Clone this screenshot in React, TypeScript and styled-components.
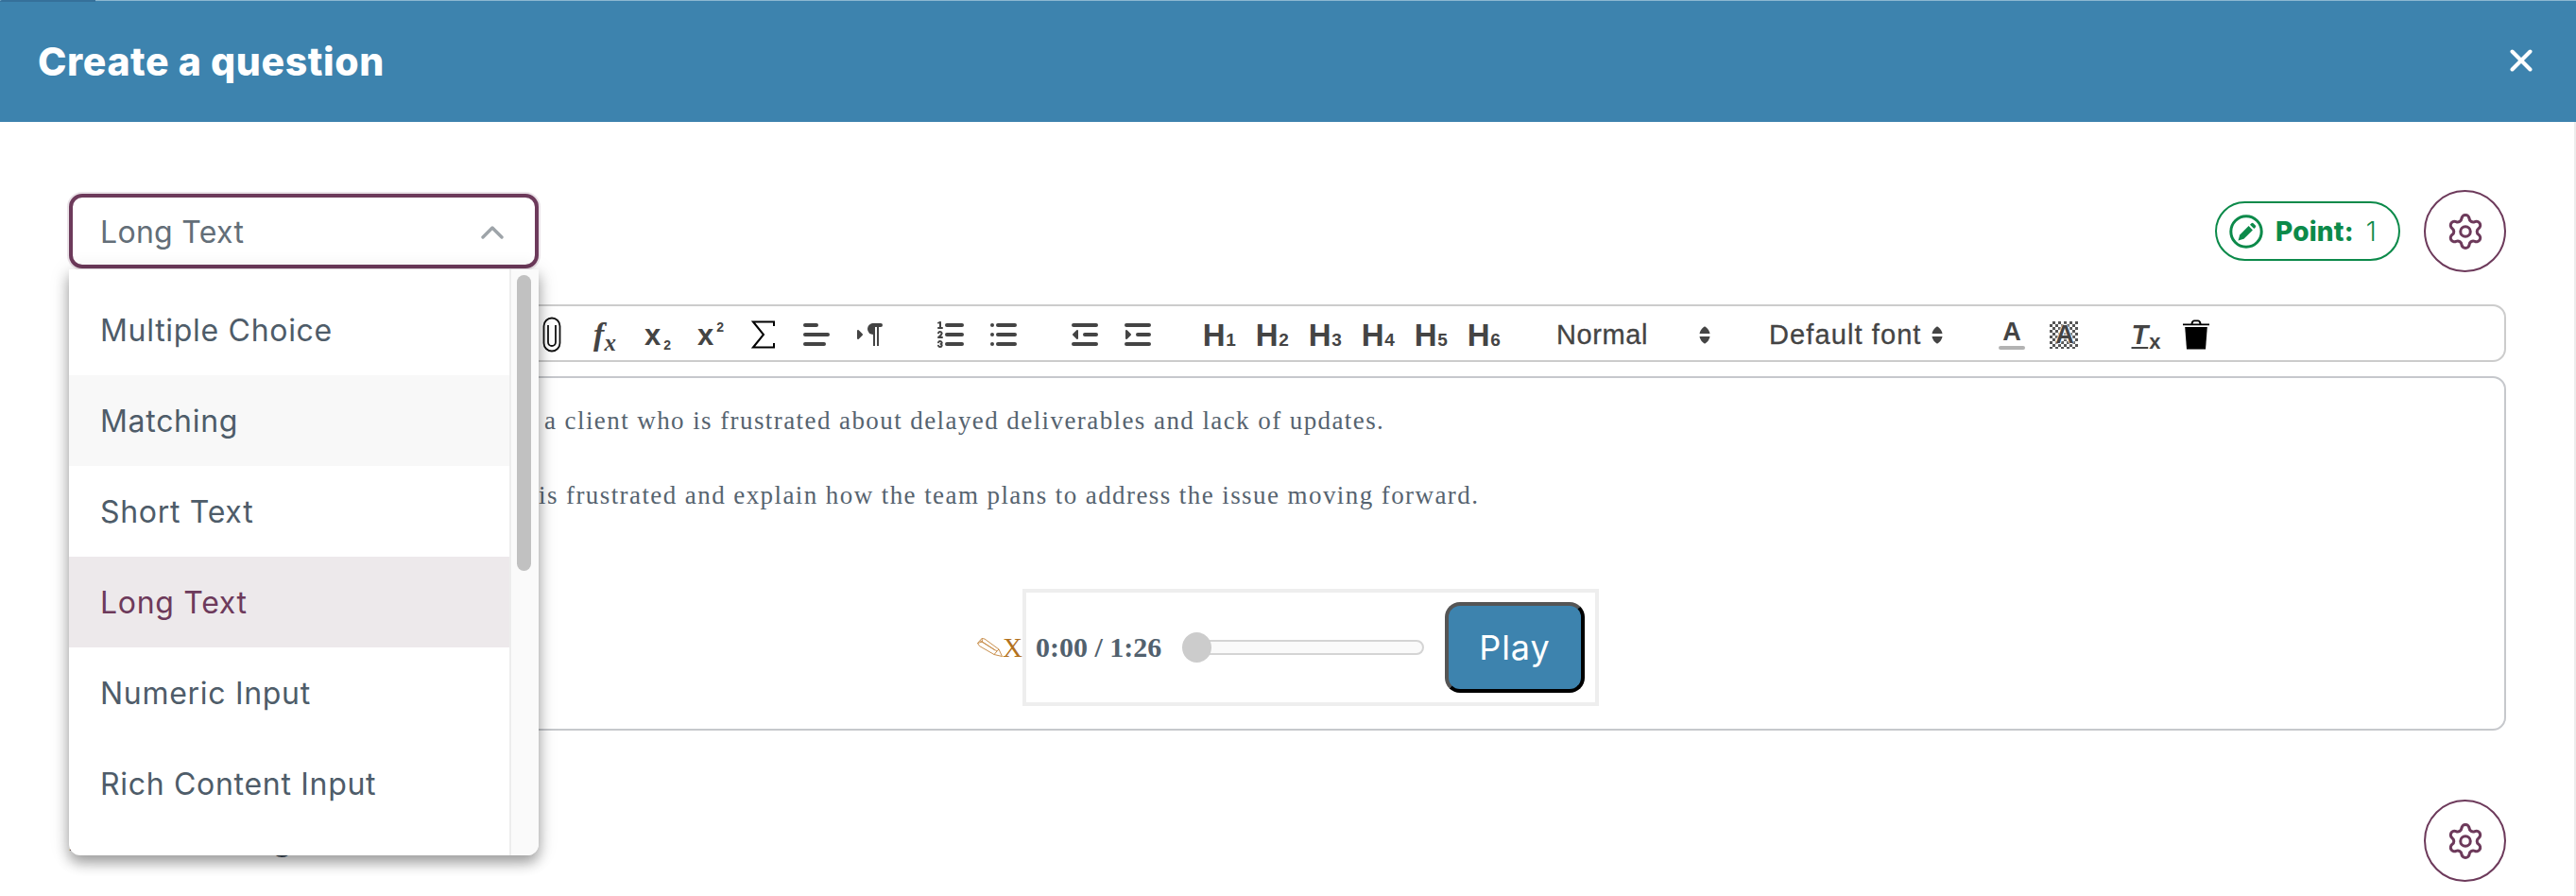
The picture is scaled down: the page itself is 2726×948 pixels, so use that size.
import React from "react";
import styled, { createGlobalStyle } from "styled-components";
import { Bold, Italic, Underline, Strikethrough, Quote, Code, Link, Image, Settings } from "lucide-react";

const SANS = `"Inter", "Liberation Sans", sans-serif`;
const HELV = `"Liberation Sans", Arial, sans-serif`;
const SERIF = `"Liberation Serif", "Times New Roman", serif`;
const PLUM = "#6d3a5b";
const BLUE = "#3d83ae";
const INK = "#444444";

const Global = createGlobalStyle`
  html, body { margin: 0; padding: 0; background: #fff; }
  #root { width: 2726px; height: 948px; overflow: hidden; }
  * { box-sizing: border-box; }
`;

const Page = styled.div`
  width: 2726px;
  height: 948px;
  overflow: hidden;
  background: #fff;
  font-family: ${SANS};
`;

const Header = styled.header`
  position: relative;
  height: 129px;
  background: ${BLUE};
  border-top: 1px solid #8cb7d1;
  padding: 0 46px 0 40px;
  display: flex;
  align-items: center;
  justify-content: space-between;
  &::before {
    content: "";
    position: absolute;
    left: 0;
    top: -1px;
    width: 101px;
    height: 2px;
    background: #35709a;
    border-top-left-radius: 4px;
  }
`;

const Title = styled.h1`
  margin: 0;
  color: #fff;
  font-size: 41px;
  line-height: 48px;
  font-weight: 800;
  letter-spacing: 0.6px;
`;

const CloseButton = styled.button`
  width: 24px;
  height: 24px;
  padding: 0;
  border: 0;
  background: none;
  display: block;
  margin-top: -2px;
  svg { display: block; }
`;

const Body = styled.main`
  height: 819px;
  border-right: 2px solid #ececec;
  padding: 72px 72px 0 73px;
`;

const TopRow = styled.div`
  height: 87px;
  display: flex;
  align-items: center;
  justify-content: space-between;
`;

const SelectWrap = styled.div`
  position: relative;
  width: 497px;
  z-index: 5;
`;

const SelectBox = styled.div`
  height: 79px;
  border: 4px solid ${PLUM};
  border-radius: 14px;
  box-shadow: 0 0 0 2px rgba(109, 58, 91, 0.14);
  background: #fff;
  padding: 2px 33px 0 29px;
  display: flex;
  align-items: center;
  justify-content: space-between;
  color: #636e78;
  font-size: 32px;
  letter-spacing: 0.3px;
`;

const Dropdown = styled.div`
  position: absolute;
  left: 0;
  top: 80px;
  width: 497px;
  height: 620px;
  display: flex;
  background: #fff;
  border-radius: 0 0 12px 12px;
  overflow: hidden;
  box-shadow: 0 8px 14px rgba(0, 0, 0, 0.32), 0 2px 22px rgba(0, 0, 0, 0.14);
`;

const OptionList = styled.ul`
  list-style: none;
  margin: 0;
  padding: 16px 0 0;
  flex: 1;
`;

const Option = styled.li<{ $state?: "hover" | "selected" }>`
  height: 96px;
  padding-left: 33px;
  display: flex;
  align-items: center;
  font-size: 32px;
  letter-spacing: 0.7px;
  color: ${(p) => (p.$state === "selected" ? PLUM : "#4e5c69")};
  background: ${(p) =>
    p.$state === "selected" ? "#ede9eb" : p.$state === "hover" ? "#f8f8f8" : "transparent"};
`;

const ScrollTrack = styled.div`
  width: 31px;
  background: #fafafa;
  border-left: 2px solid #ededed;
  padding: 6px 6px 0 6px;
`;

const ScrollThumb = styled.div`
  height: 313px;
  width: 15px;
  border-radius: 8px;
  background: #c1c1c1;
`;

const RightGroup = styled.div`
  display: flex;
  align-items: center;
  gap: 25px;
`;

const PointPill = styled.div`
  width: 196px;
  height: 63px;
  border: 2px solid #0c8a4a;
  border-radius: 32px;
  padding-left: 13px;
  display: flex;
  align-items: center;
  color: #0c8a4a;
  font-size: 28px;
`;

const PointLabel = styled.strong`
  font-weight: 800;
  margin-left: 13px;
  letter-spacing: 0.2px;
`;

const PointValue = styled.span`
  margin-left: 13px;
  font-weight: 300;
`;

const GearCircle = styled.button`
  width: 87px;
  height: 87px;
  flex: none;
  border-radius: 50%;
  border: 2px solid ${PLUM};
  background: #fff;
  padding: 0;
  display: flex;
  align-items: center;
  justify-content: center;
  color: ${PLUM};
`;

const Toolbar = styled.div`
  margin-top: 34px;
  height: 61px;
  border: 2px solid #cccccc;
  border-radius: 14px;
  padding: 3px 0 0 33px;
  display: flex;
  align-items: center;
  color: ${INK};
`;

const Group = styled.span`
  display: flex;
  align-items: center;
  margin-right: 30px;
`;

const ToolButton = styled.span<{ $dark?: boolean; $offset?: number }>`
  width: 56px;
  height: 48px;
  flex: none;
  margin-left: ${(p) => p.$offset ?? 0}px;
  display: flex;
  align-items: center;
  justify-content: center;
  color: ${(p) => (p.$dark ? "#000" : INK)};
`;

const FxGlyph = styled.span`
  font-family: ${SERIF};
  font-style: italic;
  font-weight: 700;
  font-size: 34px;
  line-height: 1;
  white-space: nowrap;
`;

const FxSub = styled.span`
  font-size: 25px;
  position: relative;
  top: 6px;
`;

const ScriptGlyph = styled.span`
  font-family: ${HELV};
  font-weight: 700;
  font-size: 31px;
  line-height: 1;
  white-space: nowrap;
`;

const SmallDigit = styled.span<{ $up?: boolean }>`
  font-size: 14px;
  font-weight: 700;
  position: relative;
  top: ${(p) => (p.$up ? "-14px" : "5px")};
  margin-left: 3px;
`;

const HeadingGlyph = styled.span`
  font-family: ${HELV};
  font-weight: 700;
  font-size: 33px;
  line-height: 1;
  white-space: nowrap;
  letter-spacing: -0.5px;
`;

const HeadingDigit = styled.span`
  font-size: 19px;
  font-weight: 700;
  margin-left: 1px;
`;

const Picker = styled.span<{ $w: number; $pad: number; $ls: number }>`
  width: ${(p) => p.$w}px;
  flex: none;
  display: flex;
  align-items: center;
  justify-content: space-between;
  padding-left: ${(p) => p.$pad}px;
  font-family: ${HELV};
  font-size: 29px;
  font-weight: 400;
  letter-spacing: ${(p) => p.$ls}px;
  color: ${INK};
  -webkit-text-stroke: 0.3px ${INK};
`;

const ColorGlyph = styled.span`
  position: relative;
  display: flex;
  flex-direction: column;
  align-items: center;
  font-family: ${HELV};
  font-weight: 700;
  font-size: 27px;
  line-height: 24px;
`;

const ColorBar = styled.span`
  display: block;
  width: 28px;
  height: 4px;
  border-radius: 2px;
  background: #b3b3b3;
  margin-top: 3px;
`;

const Dither = styled.span`
  position: absolute;
  inset: -1px -6px;
  width: 30px;
  height: 29px;
  background-image: repeating-conic-gradient(#555 0 25%, #fff 0 50%);
  background-size: 6px 6px;
`;

const DitherLetter = styled.span`
  position: relative;
  line-height: 27px;
  text-shadow: 0 0 2px #fff, 0 0 2px #fff, 0 0 3px #fff;
`;

const ClearGlyph = styled.span`
  position: relative;
  font-family: ${HELV};
  font-style: italic;
  font-weight: 700;
  font-size: 29px;
  line-height: 1;
  white-space: nowrap;
  text-decoration: underline;
  text-underline-offset: 3px;
`;

const ClearX = styled.span`
  font-style: normal;
  font-size: 22px;
  display: inline-block;
  margin-left: 1px;
  position: relative;
  top: 5px;
`;

const Editor = styled.section`
  margin-top: 15px;
  height: 375px;
  border: 2px solid #c6c8cc;
  border-radius: 14px;
  padding-top: 26px;
  font-family: ${SERIF};
  color: #56636f;
  font-size: 27px;
  letter-spacing: 1.42px;
`;

const Para = styled.p<{ $indent: number }>`
  margin: 0 0 40px;
  padding-left: ${(p) => p.$indent}px;
  line-height: 39px;
  white-space: nowrap;
`;

const AudioRow = styled.div`
  margin-top: 79px;
  display: flex;
  justify-content: center;
  align-items: center;
`;

const Scribble = styled.span`
  display: flex;
  align-items: center;
  color: #b3721e;
  font-size: 29px;
  letter-spacing: 0;
  white-space: nowrap;
  svg { margin-right: -1px; }
`;

const AudioBox = styled.div`
  width: 610px;
  height: 124px;
  border: 4px solid #eeeeee;
  padding-left: 10px;
  display: flex;
  align-items: center;
`;

const Time = styled.span`
  font-weight: 700;
  font-size: 30px;
  letter-spacing: 0;
  color: #52616e;
  white-space: nowrap;
  width: 155px;
`;

const Track = styled.div`
  position: relative;
  margin-left: 5px;
  width: 251px;
  height: 16px;
  border: 2px solid #d4d4d4;
  border-radius: 8px;
  background: #fafafa;
`;

const Thumb = styled.span`
  position: absolute;
  left: -7px;
  top: -10px;
  width: 31px;
  height: 32px;
  border-radius: 50%;
  background: #cccccc;
`;

const PlayButton = styled.button`
  margin-left: 22px;
  width: 148px;
  height: 96px;
  border-width: 4px;
  border-style: solid;
  border-color: #555 #000 #000 #555;
  border-radius: 16px;
  background: ${BLUE};
  color: #fff;
  font-family: ${SANS};
  font-size: 36px;
  letter-spacing: 1px;
  padding: 0;
`;

const FooterRow = styled.div`
  margin-top: 73px;
  display: flex;
  align-items: flex-end;
  justify-content: space-between;
`;

const SectionTitle = styled.h2`
  margin: 0 0 24px;
  font-size: 31.5px;
  line-height: 40px;
  font-weight: 700;
  color: #3d4a57;
`;

const PickerArrows = () => (
  <svg width="12" height="19" viewBox="0 0 12 19">
    <path d="M6 0.5 C8 1 11 4.5 11.5 8 H0.5 C1 4.5 4 1 6 0.5Z" fill={INK} />
    <path d="M6 18.5 C8 18 11 14.5 11.5 11 H0.5 C1 14.5 4 18 6 18.5Z" fill={INK} />
  </svg>
);

const QuillIcon: React.FC<{ children: React.ReactNode }> = ({ children }) => (
  <svg
    width="36"
    height="36"
    viewBox="0 0 18 18"
    fill="none"
    stroke={INK}
    strokeWidth="2"
    strokeLinecap="round"
    strokeLinejoin="round"
  >
    {children}
  </svg>
);

const GearIcon = () => <Settings size={42} strokeWidth={1.75} />;

const hiddenIcons = [Bold, Italic, Underline, Strikethrough, Quote, Code, Link, Image];

const options = ["Multiple Choice", "Matching", "Short Text", "Long Text", "Numeric Input", "Rich Content Input"];

export default function App() {
  return (
    <Page>
      <Global />
      <Header>
        <Title>Create a question</Title>
        <CloseButton aria-label="Close">
          <svg width="24" height="24" viewBox="0 0 24 24" stroke="#fff" strokeWidth="4" strokeLinecap="round">
            <line x1="2.5" y1="2.5" x2="21.5" y2="21.5" />
            <line x1="21.5" y1="2.5" x2="2.5" y2="21.5" />
          </svg>
        </CloseButton>
      </Header>
      <Body>
        <TopRow>
          <SelectWrap>
            <SelectBox>
              Long Text
              <svg width="24" height="15" viewBox="0 0 24 15" fill="none" stroke="#9ea4a9" strokeWidth="3.4" strokeLinecap="round" strokeLinejoin="round">
                <polyline points="2,13 12,3 22,13" />
              </svg>
            </SelectBox>
            <Dropdown>
              <OptionList>
                {options.map((o) => (
                  <Option key={o} $state={o === "Matching" ? "hover" : o === "Long Text" ? "selected" : undefined}>
                    {o}
                  </Option>
                ))}
              </OptionList>
              <ScrollTrack>
                <ScrollThumb />
              </ScrollTrack>
            </Dropdown>
          </SelectWrap>
          <RightGroup>
            <PointPill>
              <svg width="36" height="36" viewBox="0 0 36 36">
                <circle cx="18" cy="18" r="16.2" fill="none" stroke="#0c8a4a" strokeWidth="3" />
                <path d="M9.5 27.5 l1.7 -6 l9.4 -9.4 l4.3 4.3 l-9.4 9.4 z" fill="#0c8a4a" />
                <path d="M22 10.7 l1.5 -1.5 a1.4 1.4 0 0 1 2 0 l2.3 2.3 a1.4 1.4 0 0 1 0 2 l-1.5 1.5 z" fill="#0c8a4a" />
              </svg>
              <PointLabel>Point:</PointLabel>
              <PointValue>1</PointValue>
            </PointPill>
            <GearCircle aria-label="Settings">
              <GearIcon />
            </GearCircle>
          </RightGroup>
        </TopRow>

        <Toolbar>
          {hiddenIcons.map((I, i) => (
            <ToolButton key={i}>
              <I size={28} />
            </ToolButton>
          ))}
          <ToolButton $dark>
            <svg width="20" height="38" viewBox="0 0 20 38" fill="none" stroke="#111" strokeWidth="1.8">
              <path d="M1.5 27V10a8.5 8.5 0 0 1 17 0V28a8.5 8.5 0 0 1-17 0Z" />
              <path d="M6 9V27a4 4 0 0 0 8 0V9" />
            </svg>
          </ToolButton>
          <ToolButton>
            <FxGlyph>f<FxSub>x</FxSub></FxGlyph>
          </ToolButton>
          <ToolButton>
            <ScriptGlyph>x<SmallDigit>2</SmallDigit></ScriptGlyph>
          </ToolButton>
          <ToolButton>
            <ScriptGlyph>x<SmallDigit $up>2</SmallDigit></ScriptGlyph>
          </ToolButton>
          <ToolButton $dark>
            <svg width="26" height="30" viewBox="0 0 26 30" fill="none" stroke="#000" strokeWidth="2">
              <path d="M24 6V1.5H2L13 15 2 28.5H24V24" />
            </svg>
          </ToolButton>
          <ToolButton>
            <QuillIcon>
              <line x1="3" x2="15" y1="9" y2="9" />
              <line x1="3" x2="13" y1="14" y2="14" />
              <line x1="3" x2="9" y1="4" y2="4" />
            </QuillIcon>
          </ToolButton>
          <Group>
            <ToolButton>
              <QuillIcon>
                <polygon points="3 11 5 9 3 7 3 11" fill={INK} strokeWidth="1" />
                <line x1="15" x2="11" y1="4" y2="4" />
                <path d="M11,3a3,3,0,0,0,0,6h1V3H11Z" fill={INK} stroke="none" />
                <rect height="11" width="1" x="11" y="4" fill={INK} stroke="none" />
                <rect height="11" width="1" x="13" y="4" fill={INK} stroke="none" />
              </QuillIcon>
            </ToolButton>
          </Group>
          <Group>
            <ToolButton>
              <QuillIcon>
                <line x1="7" x2="15" y1="4" y2="4" />
                <line x1="7" x2="15" y1="9" y2="9" />
                <line x1="7" x2="15" y1="14" y2="14" />
                <line x1="2.5" x2="4.5" y1="5.5" y2="5.5" strokeWidth="1" />
                <path d="M3.5,6A0.5,0.5,0,0,1,3,5.5V3.085l-0.276.138A0.5,0.5,0,0,1,2.053,3c-0.124-.247-0.023-0.324.224-0.447l1-.5A0.5,0.5,0,0,1,4,2.5v3A0.5,0.5,0,0,1,3.5,6Z" fill={INK} stroke="none" />
                <path d="M4.5,10.5h-2c0-.234,1.85-1.076,1.85-2.234A0.959,0.959,0,0,0,2.5,8.156" strokeWidth="1" />
                <path d="M2.5,14.846a0.959,0.959,0,0,0,1.85-.109A0.7,0.7,0,0,0,3.75,14a0.688,0.688,0,0,0,.6-0.736,0.959,0.959,0,0,0-1.85-.109" strokeWidth="1" />
              </QuillIcon>
            </ToolButton>
            <ToolButton>
              <QuillIcon>
                <line x1="6" x2="15" y1="4" y2="4" />
                <line x1="6" x2="15" y1="9" y2="9" />
                <line x1="6" x2="15" y1="14" y2="14" />
                <line x1="3" x2="3" y1="4" y2="4" />
                <line x1="3" x2="3" y1="9" y2="9" />
                <line x1="3" x2="3" y1="14" y2="14" />
              </QuillIcon>
            </ToolButton>
          </Group>
          <Group>
            <ToolButton>
              <QuillIcon>
                <line x1="3" x2="15" y1="14" y2="14" />
                <line x1="3" x2="15" y1="4" y2="4" />
                <line x1="9" x2="15" y1="9" y2="9" />
                <polygon points="5 7 5 11 3 9 5 7" fill={INK} strokeWidth="1" />
              </QuillIcon>
            </ToolButton>
            <ToolButton>
              <QuillIcon>
                <line x1="3" x2="15" y1="14" y2="14" />
                <line x1="3" x2="15" y1="4" y2="4" />
                <line x1="9" x2="15" y1="9" y2="9" />
                <polygon points="3 7 3 11 5 9 3 7" fill={INK} strokeWidth="1" />
              </QuillIcon>
            </ToolButton>
          </Group>
          {[1, 2, 3, 4, 5, 6].map((n) => (
            <ToolButton key={n}>
              <HeadingGlyph>H<HeadingDigit>{n}</HeadingDigit></HeadingGlyph>
            </ToolButton>
          ))}
          <Picker $w={212} $pad={49} $ls={0.6}>
            Normal
            <PickerArrows />
          </Picker>
          <Picker $w={246} $pad={62} $ls={1.1}>
            Default font
            <PickerArrows />
          </Picker>
          <ToolButton $offset={45}>
            <ColorGlyph>A<ColorBar /></ColorGlyph>
          </ToolButton>
          <ToolButton>
            <ColorGlyph>
              <Dither />
              <DitherLetter>A</DitherLetter>
            </ColorGlyph>
          </ToolButton>
          <ToolButton $offset={30}>
            <ClearGlyph>T<ClearX>x</ClearX></ClearGlyph>
          </ToolButton>
          <ToolButton $dark $offset={-3}>
            <svg width="28" height="32" viewBox="0 0 28 32" fill="#000">
              <path d="M0 4.5H8.5C9 1.5 10.5 0.5 12 0.5H16C17.5 0.5 19 1.5 19.5 4.5H28V6.2H0Z M10.5 4.5H17.5C17.2 2.8 16.5 2.2 15.5 2.2H12.5C11.5 2.2 10.8 2.8 10.5 4.5Z" fillRule="evenodd" />
              <path d="M2.2 8H25.8L24 31.5H4Z" />
            </svg>
          </ToolButton>
        </Toolbar>

        <Editor>
          <Para $indent={501}>a client who is frustrated about delayed deliverables and lack of updates.</Para>
          <Para $indent={495}>is frustrated and explain how the team plans to address the issue moving forward.</Para>
          <AudioRow>
            <Scribble>
              <svg width="29" height="22" viewBox="0 0 29 22" fill="none" stroke="#c98f4d" strokeWidth="1" strokeLinejoin="round">
                <path d="M1.5 6.5 L6 1.5 L9 2 L24 13 L27.5 20.5 L19 18.5 L3.5 9.5Z" />
                <path d="M6 1.5 L6.5 5 L22 15 L24 13" />
                <path d="M1.5 6.5 L6.5 5 M22 15 L19 18.5 M4 3.8 L20 14" />
              </svg>
              X
            </Scribble>
            <AudioBox>
              <Time>0:00 / 1:26</Time>
              <Track><Thumb /></Track>
              <PlayButton>Play</PlayButton>
            </AudioBox>
          </AudioRow>
        </Editor>

        <FooterRow>
          <SectionTitle>Answer Setting</SectionTitle>
          <GearCircle aria-label="Answer settings">
            <GearIcon />
          </GearCircle>
        </FooterRow>
      </Body>
    </Page>
  );
}
